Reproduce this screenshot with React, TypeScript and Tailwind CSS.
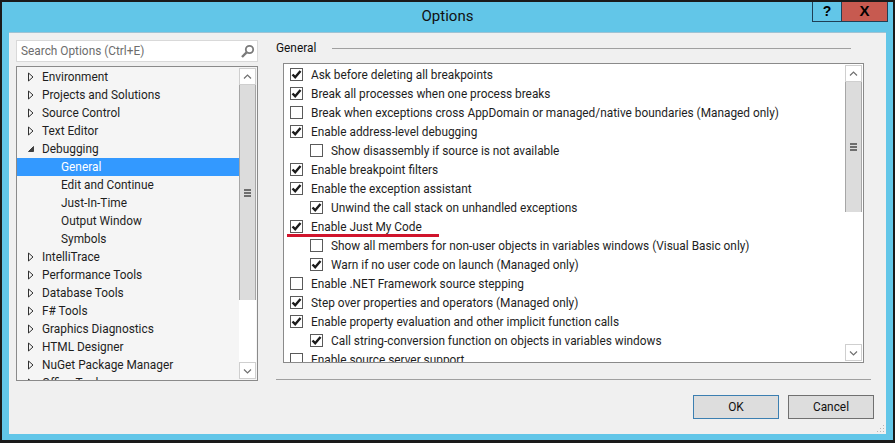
import React from 'react';

const tree = [
  { label: 'Environment', kind: 'closed' },
  { label: 'Projects and Solutions', kind: 'closed' },
  { label: 'Source Control', kind: 'closed' },
  { label: 'Text Editor', kind: 'closed' },
  { label: 'Debugging', kind: 'open' },
  { label: 'General', kind: 'selected' },
  { label: 'Edit and Continue', kind: 'child' },
  { label: 'Just-In-Time', kind: 'child' },
  { label: 'Output Window', kind: 'child' },
  { label: 'Symbols', kind: 'child' },
  { label: 'IntelliTrace', kind: 'closed' },
  { label: 'Performance Tools', kind: 'closed' },
  { label: 'Database Tools', kind: 'closed' },
  { label: 'F# Tools', kind: 'closed' },
  { label: 'Graphics Diagnostics', kind: 'closed' },
  { label: 'HTML Designer', kind: 'closed' },
  { label: 'NuGet Package Manager', kind: 'closed' },
  { label: 'Office Tools', kind: 'closed' },
];

const options = [
  { label: 'Ask before deleting all breakpoints', on: true },
  { label: 'Break all processes when one process breaks', on: true },
  { label: 'Break when exceptions cross AppDomain or managed/native boundaries (Managed only)', on: false },
  { label: 'Enable address-level debugging', on: true },
  { label: 'Show disassembly if source is not available', on: false, sub: true },
  { label: 'Enable breakpoint filters', on: true },
  { label: 'Enable the exception assistant', on: true },
  { label: 'Unwind the call stack on unhandled exceptions', on: true, sub: true },
  { label: 'Enable Just My Code', on: true },
  { label: 'Show all members for non-user objects in variables windows (Visual Basic only)', on: false, sub: true },
  { label: 'Warn if no user code on launch (Managed only)', on: true, sub: true },
  { label: 'Enable .NET Framework source stepping', on: false },
  { label: 'Step over properties and operators (Managed only)', on: true },
  { label: 'Enable property evaluation and other implicit function calls', on: true },
  { label: 'Call string-conversion function on objects in variables windows', on: true, sub: true },
  { label: 'Enable source server support', on: false },
];

const Arrow = ({ open }: { open: boolean }) => (
  <svg width="8" height="10" viewBox="0 0 8 10" className="shrink-0">
    {open ? (
      <path d="M6.5 2.5V7.5H1.5Z" fill="#404040" stroke="#404040" />
    ) : (
      <path d="M1.5 1V9L6 5Z" fill="none" stroke="#303030" />
    )}
  </svg>
);

const Scrollbar = ({ thumb }: { thumb: number }) => (
  <div className="w-[17px] h-full shrink-0 flex flex-col bg-white">
    <div className="h-[17px] shrink-0 border border-[#cfcfcf] flex items-center justify-center">
      <svg width="9" height="6" viewBox="0 0 9 6"><path d="M1 4.5L4.5 1L8 4.5" fill="none" stroke="#707070" strokeWidth="1.2" /></svg>
    </div>
    <div className="flex-1 min-h-0">
      <div className="bg-[#dcdcdc] border-x border-[#a6a6a6] flex items-center justify-center" style={{ height: thumb }}>
        <div className="w-[7px] h-[8px] flex flex-col justify-between">
          <div className="h-[2px] bg-[#6e6e6e]" />
          <div className="h-[2px] bg-[#6e6e6e]" />
          <div className="h-[2px] bg-[#6e6e6e]" />
        </div>
      </div>
    </div>
    <div className="h-[17px] shrink-0 border border-[#cfcfcf] flex items-center justify-center">
      <svg width="9" height="6" viewBox="0 0 9 6"><path d="M1 1.5L4.5 5L8 1.5" fill="none" stroke="#707070" strokeWidth="1.2" /></svg>
    </div>
  </div>
);

const Checkbox = ({ on }: { on: boolean }) => (
  <div className="w-[13px] h-[13px] shrink-0 border border-[#5a5a5a] bg-white flex items-center justify-center">
    {on && (
      <svg width="11" height="11" viewBox="0 0 11 11">
        <path d="M1.5 5.5L4.2 8.2L9.5 2" fill="none" stroke="#1a1a1a" strokeWidth="2.4" />
      </svg>
    )}
  </div>
);

export default function App() {
  return (
    <div className="w-[895px] h-[443px] flex flex-col bg-[#62c6e8] border-x-2 border-t-2 border-b-[3px] border-[#1a1a1a] overflow-hidden font-['Roboto',sans-serif] text-[11.85px] text-[#1e1e1e]">
      {/* title bar */}
      <div className="h-[30px] shrink-0 flex items-start justify-end pr-[5px] relative">
        <span className="absolute left-0 right-0 top-[3px] text-center text-[15px] text-[#111]">Options</span>
        <div className="w-[29px] h-[20px] border border-t-0 border-r-0 border-[#1f3f55] flex items-center justify-center font-['Liberation_Sans',sans-serif] font-bold text-[14px] text-black">?</div>
        <div className="w-[47px] h-[20px] bg-[#c75a50] border border-t-0 border-[#1f3f55] flex items-center justify-center font-['Liberation_Sans',sans-serif] font-bold text-[15px] text-black">X</div>
      </div>

      {/* dialog body */}
      <div className="flex-1 min-h-0 mx-[7px] mb-[6px] bg-[#f0f0f0] border-t border-[#9fc3d4] flex pl-[7px] pt-[7px] relative">
        <div className="w-[242px] shrink-0 flex flex-col">
          <div className="h-[22px] shrink-0 bg-white border border-[#d9d9d9] flex items-center justify-between pl-[4px] pr-[2px]">
            <span className="mt-[2px] text-[#6d6d6d]">Search Options (Ctrl+E)</span>
            <svg width="15" height="15" viewBox="0 0 15 15">
              <circle cx="9.5" cy="5.5" r="3.7" fill="none" stroke="#7a7a7a" strokeWidth="1.8" />
              <path d="M6.6 8.4L2 13" stroke="#7a7a7a" strokeWidth="2.4" />
            </svg>
          </div>
          <div className="h-[315px] mt-[4px] shrink-0 bg-[#f5f5f5] border border-[#8a8a8a] flex overflow-hidden">
            <div className="flex-1 min-w-0 pt-[1px] overflow-hidden">
              {tree.map((item) => (
                <div key={item.label} className={`h-[18px] flex items-center whitespace-nowrap ${item.kind === 'selected' ? 'bg-[#3399ff] text-white' : ''}`}>
                  {item.kind === 'closed' || item.kind === 'open' ? (
                    <div className="pl-[10px] flex items-center gap-[7px]">
                      <Arrow open={item.kind === 'open'} />
                      <span className="mt-[2px]">{item.label}</span>
                    </div>
                  ) : (
                    <span className="mt-[2px] pl-[44px]">{item.label}</span>
                  )}
                </div>
              ))}
            </div>
            <div className="py-[1px] pr-[1px] h-full">
              <Scrollbar thumb={215} />
            </div>
          </div>
        </div>

        <div className="w-[595px] ml-[18px] shrink-0 flex flex-col">
          <div className="h-[16px] shrink-0 flex items-center gap-[16px] pr-[20px]">
            <span className="mt-[2px] text-[#111]">General</span>
            <div className="flex-1 h-px bg-[#a0a0a0]" />
          </div>
          <div className="h-[300px] mt-[7px] ml-[7px] w-[581px] shrink-0 bg-white border border-[#8a8a8a] flex overflow-hidden">
            <div className="flex-1 min-w-0 overflow-hidden pt-[1px]">
              {options.map((o) => (
                <div key={o.label} className={`h-[19px] flex items-center gap-[8px] whitespace-nowrap ${o.sub ? 'pl-[26px]' : 'pl-[6px]'}`}>
                  <Checkbox on={o.on} />
                  <span className="mt-[2px]">{o.label}</span>
                </div>
              ))}
            </div>
            <div className="py-[1px] pr-[1px] h-full">
              <Scrollbar thumb={130} />
            </div>
          </div>
          <div className="h-px mt-[16px] shrink-0 bg-[#a0a0a0]" />
          <div className="mt-[15px] -mr-[3px] flex justify-end gap-[9px]">
            <button className="w-[86px] h-[24px] pt-[2px] bg-[#dddddd] border border-[#3c7fb1] text-[#111]">OK</button>
            <button className="w-[86px] h-[24px] pt-[2px] bg-[#dddddd] border border-[#707070] text-[#111]">Cancel</button>
          </div>
        </div>

        {/* red annotation under Enable Just My Code */}
        <div className="absolute left-[278px] top-[201px] w-[152px] h-[3px] bg-[#d0142c]" />

        {/* resize grip */}
        <svg width="10" height="10" viewBox="0 0 10 10" className="absolute right-0 bottom-0">
          <g fill="#b5b5b5">
            <rect x="7" y="1" width="1" height="1" /><rect x="4" y="4" width="1" height="1" /><rect x="7" y="4" width="1" height="1" />
            <rect x="1" y="7" width="1" height="1" /><rect x="4" y="7" width="1" height="1" /><rect x="7" y="7" width="1" height="1" />
          </g>
        </svg>
      </div>
    </div>
  );
}
